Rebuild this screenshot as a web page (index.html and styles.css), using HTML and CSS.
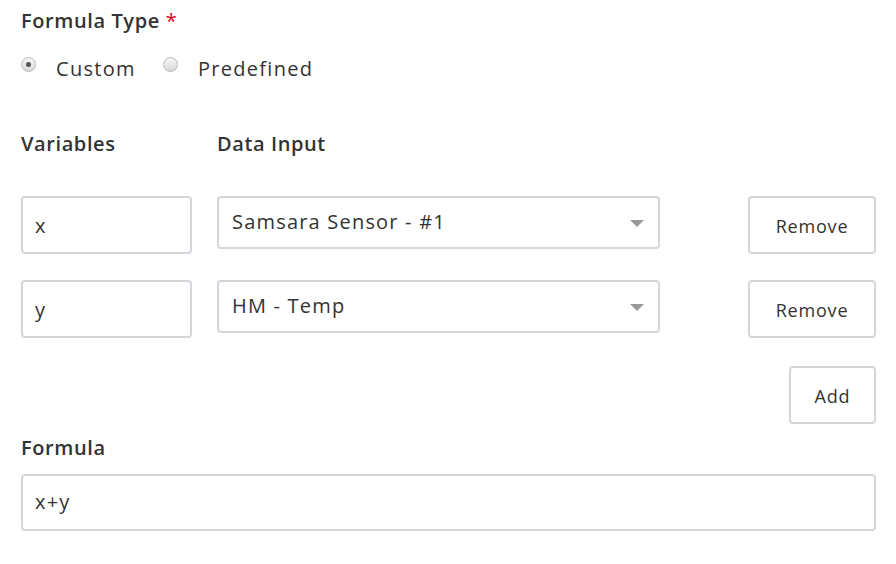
FILE: index.html
```html
<!DOCTYPE html>
<html>
<head>
<meta charset="utf-8">
<link rel="stylesheet" href="styles.css">
</head>
<body>
<div class="form">
  <div class="field-label">Formula Type <span class="req">*</span></div>
  <div class="radios">
    <label class="radio"><span class="dot checked"></span><span class="radio-text">Custom</span></label>
    <label class="radio"><span class="dot"></span><span class="radio-text">Predefined</span></label>
  </div>

  <div class="grid header">
    <div class="col-label">Variables</div>
    <div class="col-label">Data Input</div>
  </div>

  <div class="grid row">
    <div class="input var">x</div>
    <div class="select"><span>Samsara Sensor - #1</span><span class="caret"></span></div>
    <div class="btn remove">Remove</div>
  </div>
  <div class="grid row">
    <div class="input var">y</div>
    <div class="select"><span>HM - Temp</span><span class="caret"></span></div>
    <div class="btn remove">Remove</div>
  </div>

  <div class="add-row"><div class="btn add">Add</div></div>

  <div class="field-label formula-label">Formula</div>
  <div class="input formula">x+y</div>
</div>
</body>
</html>
```
FILE: styles.css
```css
html, body {
  margin: 0;
  padding: 0;
  background: #ffffff;
}
body {
  font-family: "Open Sans", "Liberation Sans", sans-serif;
  color: #333333;
}
.form {
  width: 855px;
  padding: 7px 0 0 21px;
}
.field-label {
  font-size: 20px;
  font-weight: 600;
  letter-spacing: 0.6px;
  line-height: 28px;
  color: #333;
}
.req {
  color: #d0021b;
  font-weight: 400;
}
.radios {
  display: flex;
  align-items: center;
  margin-top: 21px;
  height: 24px;
}
.radio {
  display: flex;
  align-items: center;
  margin-right: 27px;
}
.dot {
  width: 15px;
  height: 15px;
  border-radius: 50%;
  border: 1px solid #b8b8b8;
  background: linear-gradient(#f6f6f6, #d8d8d8);
  box-sizing: border-box;
  position: relative;
  margin-top: -7px;
}
.dot.checked::after {
  content: "";
  position: absolute;
  left: 4px;
  top: 4px;
  width: 5px;
  height: 5px;
  border-radius: 50%;
  background: #555;
}
.radio-text {
  font-size: 20px;
  margin-left: 20px;
  letter-spacing: 1.3px;
}
.grid {
  display: grid;
  grid-template-columns: 171px 443px 1fr;
  column-gap: 25px;
  align-items: start;
}
.header {
  margin-top: 50px;
}
.col-label {
  font-size: 20px;
  font-weight: 600;
  letter-spacing: 0.6px;
  line-height: 28px;
}
.row {
  margin-top: 38px;
}
.row + .row {
  margin-top: 26px;
}
.input {
  height: 58px;
  box-sizing: border-box;
  border: 2px solid #d3d6da;
  border-radius: 4px;
  padding: 0 12px;
  display: flex;
  align-items: center;
  font-size: 20px;
  letter-spacing: 1.2px;
  background: #fff;
}
.select {
  height: 53px;
  box-sizing: border-box;
  border: 2px solid #d3d6da;
  border-radius: 4px;
  padding: 0 14px 0 13px;
  display: flex;
  align-items: center;
  justify-content: space-between;
  font-size: 20px;
  letter-spacing: 1.2px;
  padding-bottom: 3px;
}
.caret {
  width: 0;
  height: 0;
  border-left: 7px solid transparent;
  border-right: 7px solid transparent;
  border-top: 7px solid #999;
  margin-top: 4px;
}
.btn {
  height: 58px;
  box-sizing: border-box;
  border: 2px solid #d3d6da;
  border-radius: 4px;
  background: #fff;
  display: flex;
  align-items: center;
  justify-content: center;
  font-size: 18px;
  letter-spacing: 0.8px;
  padding-top: 2px;
}
.remove {
  width: 128px;
  justify-self: end;
}
.add-row {
  display: flex;
  justify-content: flex-end;
  margin-top: 28px;
}
.add {
  width: 87px;
}
.formula-label {
  margin-top: 10px;
}
.formula {
  margin-top: 12px;
  height: 57px;
  padding-bottom: 2px;
}
```
